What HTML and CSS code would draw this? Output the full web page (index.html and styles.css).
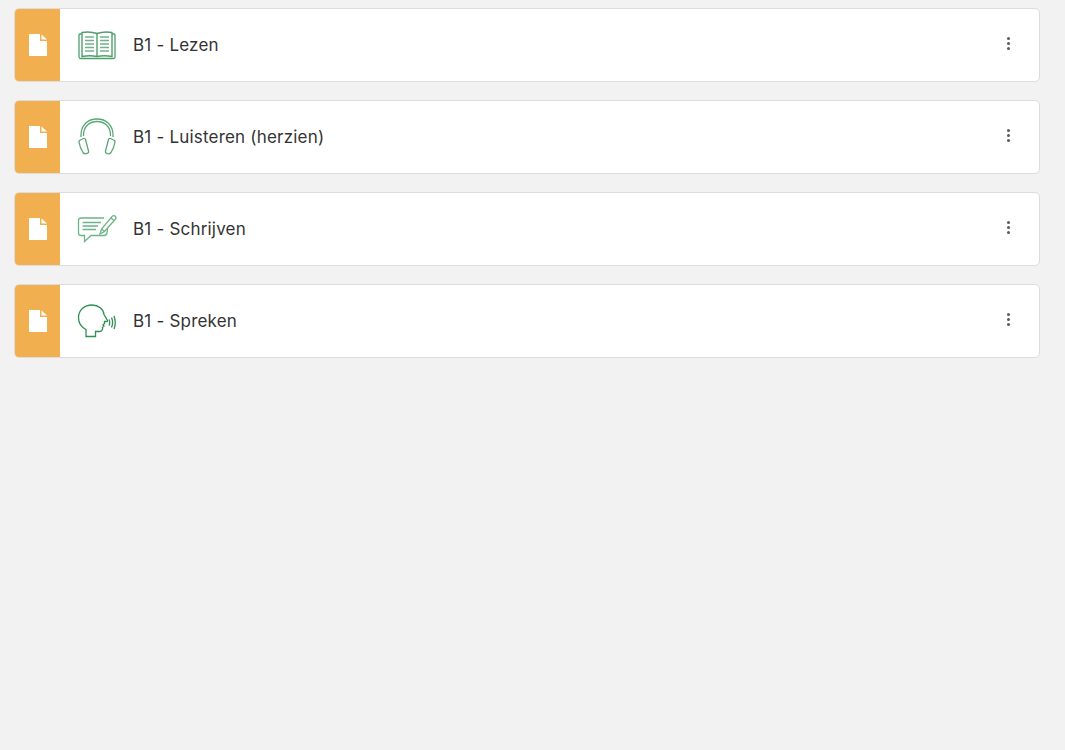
FILE: index.html
```html
<!DOCTYPE html>
<html lang="en">
<head>
  <meta charset="UTF-8">
  <meta name="viewport" content="width=device-width, initial-scale=1">
  <title>B1</title>
  <link rel="stylesheet" href="styles.css">
</head>
<body>
  <div class="list">

    <div class="card">
      <div class="type">
        <svg class="doc" width="18" height="22" viewBox="0 0 18 22"><path d="M0 0H11V7H18V22H0Z" fill="#fff"/><path d="M12.5 0.5L18 5.5H12.5Z" fill="#fff"/></svg>
      </div>
      <svg class="pic" width="40" height="32" viewBox="0 0 40 32" fill="none" stroke="#4f9e6c">
        <path d="M5 5H3Q2 5 2 6V28Q2 29.500 3.500 29.500H36.500Q38 29.500 38 28V6Q38 5 37 5H35" stroke-width="1.300"/>
        <path d="M5 3.500Q13 2 20 4.500Q27 2 35 3.500V27.500Q27 26 20 27.500Q13 26 5 27.500Z" stroke-width="1.400"/>
        <path d="M20 4.500V27.500" stroke-width="1.400"/>
        <path d="M8 8H17M8 11.500H17M8 15H17M8 18.500H17M8 22H17M23 8H32M23 11.500H32M23 15H32M23 18.500H32M23 22H32" stroke-width="1.500" opacity=".8"/>
      </svg>
      <div class="name">B1 - Lezen</div>
      <div class="more"><i></i><i></i><i></i></div>
    </div>

    <div class="card">
      <div class="type">
        <svg class="doc" width="18" height="22" viewBox="0 0 18 22"><path d="M0 0H11V7H18V22H0Z" fill="#fff"/><path d="M12.5 0.5L18 5.5H12.5Z" fill="#fff"/></svg>
      </div>
      <svg class="pic" width="40" height="38" viewBox="0 0 40 38" fill="none" stroke="#5aa676" stroke-width="1.300">
        <path d="M4 19V17C4 7 11 1 20 1S36 7 36 17V19"/>
        <path d="M6.500 18V17C6.500 9 12 3.500 20 3.500S33.500 9 33.500 17V18"/>
        <path d="M2.500 22.500L6.500 20.500Q8 20 8.500 21.500L11.500 33Q12 35 10 35.500Q7.500 36.500 6 34.500Q3 30 2 24Q2 23 2.500 22.500Z"/>
        <path d="M37.500 22.500L33.500 20.500Q32 20 31.500 21.500L28.500 33Q28 35 30 35.500Q32.500 36.500 34 34.500Q37 30 38 24Q38 23 37.500 22.500Z"/>
      </svg>
      <div class="name">B1 - Luisteren (herzien)</div>
      <div class="more"><i></i><i></i><i></i></div>
    </div>

    <div class="card">
      <div class="type">
        <svg class="doc" width="18" height="22" viewBox="0 0 18 22"><path d="M0 0H11V7H18V22H0Z" fill="#fff"/><path d="M12.5 0.5L18 5.5H12.5Z" fill="#fff"/></svg>
      </div>
      <svg class="pic" width="40" height="30" viewBox="0 0 40 30" fill="none" stroke="#6db486" stroke-width="1.300">
        <path d="M27 4H4Q1.500 4 1.500 6.500V19Q1.500 21.500 4 21.500H7.500V27.500L14 21.500H27Q29.500 21.500 30 19L30.500 14"/>
        <path d="M5.500 8.500H24M5.500 12H21M5.500 15.500H19" stroke-width="1.400"/>
        <path d="M23 20L24.500 15L35.500 2Q37 1 38.500 2.300Q39.500 4 38.500 5L27.500 17.500Z"/>
        <path d="M24.500 15L27.500 17.500M34 4L37 6.500"/>
      </svg>
      <div class="name">B1 - Schrijven</div>
      <div class="more"><i></i><i></i><i></i></div>
    </div>

    <div class="card">
      <div class="type">
        <svg class="doc" width="18" height="22" viewBox="0 0 18 22"><path d="M0 0H11V7H18V22H0Z" fill="#fff"/><path d="M12.5 0.5L18 5.5H12.5Z" fill="#fff"/></svg>
      </div>
      <svg class="pic" width="40" height="34" viewBox="0 0 40 34" fill="none" stroke="#2f8f55" stroke-width="1.300">
        <path d="M9 32.500V25.500C4 23 1.500 18.500 1.500 13.500C1.500 6 7.500 1 15 1C21.500 1 26.500 5 27 10.500L30.500 16.500Q30.800 17.500 29.500 17.500H27.500V19.500L26 21L27 22L25.500 23.500V25.500Q25 27.500 22.500 27.500H18.500V32.500Z"/>
        <path d="M32 15.500Q33.500 18.500 32 21.500M34.500 13.500Q36.700 18.500 34.500 23.500M37 12Q39.500 18.500 37 25"/>
      </svg>
      <div class="name">B1 - Spreken</div>
      <div class="more"><i></i><i></i><i></i></div>
    </div>

  </div>
</body>
</html>
```

FILE: styles.css
```css
body {
  margin: 0;
  padding: 8px 25px 0 14px;
  background: #f2f2f2;
  color: #333;
  font-family: Inter, "Noto Sans", sans-serif;
}
.list {
  display: flex;
  flex-direction: column;
  gap: 18px;
}
.card {
  display: flex;
  align-items: center;
  height: 74px;
  box-sizing: border-box;
  background: #fff;
  border: 1px solid #ddd;
  border-radius: 5px;
  overflow: hidden;
}
.type {
  flex: none;
  display: flex;
  align-items: center;
  justify-content: center;
  width: 45px;
  height: 100%;
  background: #f1af50;
}
.pic {
  flex: none;
  margin-left: 17px;
}
.name {
  flex: 1;
  margin-left: 16px;
  font-size: 17px;
  letter-spacing: 0.2px;
  color: #333;
}
.more {
  flex: none;
  display: flex;
  flex-direction: column;
  gap: 2px;
  margin: 0 29px 4px 0;
}
.more i {
  width: 3px;
  height: 3px;
  border-radius: 50%;
  background: #5c5c5c;
}
```
